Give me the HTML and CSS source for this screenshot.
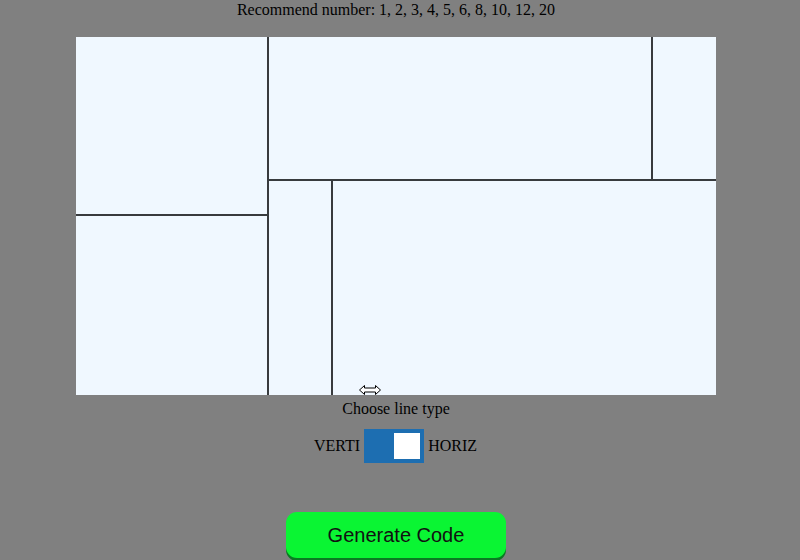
FILE: index.html
```html
<!DOCTYPE html>
<html>
<head>
<meta charset="utf-8">
<link rel="stylesheet" href="styles.css">
</head>
<body>
<div class="page">
  <p class="recommend">Recommend number: 1, 2, 3, 4, 5, 6, 8, 10, 12, 20</p>
  <div class="canvas">
    <div class="col left">
      <div class="cell h178"></div>
      <div class="hline"></div>
      <div class="cell grow"></div>
    </div>
    <div class="vline"></div>
    <div class="col grow">
      <div class="row h142">
        <div class="cell w383"></div>
        <div class="vline"></div>
        <div class="cell grow"></div>
      </div>
      <div class="hline"></div>
      <div class="row grow">
        <div class="cell w63"></div>
        <div class="vline"></div>
        <div class="cell grow"></div>
      </div>
    </div>
    <svg class="cursor" width="24" height="12" viewBox="0 0 24 12">
      <path d="M1.5 6 L6.5 1.5 L6.5 4 L17.5 4 L17.5 1.5 L22.5 6 L17.5 10.5 L17.5 8 L6.5 8 L6.5 10.5 Z" fill="#fff" stroke="#000" stroke-width="1"/>
    </svg>
  </div>
  <p class="choose">Choose line type</p>
  <div class="toggle-row">
    <span class="lbl">VERTI</span>
    <span class="switch"><span class="knob"></span></span>
    <span class="lbl">HORIZ</span>
  </div>
  <div class="btn-wrap">
    <button class="gen">Generate Code</button>
  </div>
</div>
</body>
</html>
```
FILE: styles.css
```css
html, body {
  margin: 0;
  padding: 0;
  background: #808080;
  height: 100%;
  overflow: hidden;
}
.page {
  width: 792px;
  font-family: "Liberation Serif", "Times New Roman", serif;
  font-size: 16px;
  color: #000;
  display: flex;
  flex-direction: column;
  align-items: center;
}
.recommend {
  margin: 0;
  padding-top: 1px;
  line-height: 18px;
}
.canvas {
  position: relative;
  margin-top: 18px;
  width: 640px;
  height: 358px;
  background: #f0f8ff;
  display: flex;
}
.col { display: flex; flex-direction: column; }
.row { display: flex; }
.left { width: 191px; }
.grow { flex: 1; }
.h178 { height: 177px; }
.h142 { height: 142px; }
.w383 { width: 382px; }
.w63 { width: 62px; }
.hline { height: 2px; background: #383b3e; }
.vline { width: 2px; background: #383b3e; }
.cursor {
  position: absolute;
  left: 282px;
  top: 347px;
}
.choose {
  margin: 0;
  margin-top: 5px;
  line-height: 18px;
}
.toggle-row {
  margin-top: 11px;
  margin-right: 1px;
  display: flex;
  align-items: center;
  gap: 4px;
}
.switch {
  width: 60px;
  height: 34px;
  background: #1d6eb1;
  display: flex;
  align-items: center;
  justify-content: flex-end;
  padding-right: 4px;
  box-sizing: border-box;
}
.knob {
  width: 26px;
  height: 26px;
  background: #fff;
}
.btn-wrap {
  margin-top: 49px;
}
.gen {
  width: 220px;
  height: 46px;
  border: none;
  border-radius: 11px;
  background: #0af533;
  box-shadow: 0 3px 0 #0a7a22;
  font-family: "Liberation Sans", Arial, sans-serif;
  font-size: 20px;
  color: #111;
  padding: 0;
}
```
